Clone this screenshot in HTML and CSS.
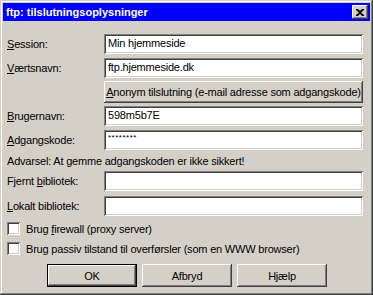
FILE: index.html
```html
<!DOCTYPE html>
<html lang="da">
<head>
    <meta charset="UTF-8">
    <title>ftp: tilslutningsoplysninger</title>
    <link rel="stylesheet" href="styles.css">
</head>
<body>
    <div class="window">
        <div class="titlebar">
            <span class="title">ftp: tilslutningsoplysninger</span>
            <span class="close">
                <svg width="8" height="7" viewBox="0 0 8 7">
                    <path d="M0 0h2l2 2 2-2h2v1l-3 2.5 3 2.5v1h-2l-2-2-2 2h-2v-1l3-2.5-3-2.5z" fill="#000"/>
                </svg>
            </span>
        </div>

        <div class="content">
            <div class="row r-session">
                <label><u>S</u>ession:</label>
                <div class="field">Min hjemmeside</div>
            </div>
            <div class="row r-host">
                <label><u>V</u>ærtsnavn:</label>
                <div class="field">ftp.hjemmeside.dk</div>
            </div>
            <div class="row r-anon">
                <div class="btn wide"><span><u>A</u>nonym tilslutning (e-mail adresse som adgangskode)</span></div>
            </div>
            <div class="row r-user">
                <label><u>B</u>rugernavn:</label>
                <div class="field">598m5b7E</div>
            </div>
            <div class="row r-pass">
                <label><u>A</u>dgangskode:</label>
                <div class="field pass">********</div>
            </div>
            <p class="warning">Advarsel: At gemme adgangskoden er ikke sikkert!</p>
            <div class="row r-remote">
                <label>Fjernt <u>b</u>ibliotek:</label>
                <div class="field"></div>
            </div>
            <div class="row r-local">
                <label><u>L</u>okalt bibliotek:</label>
                <div class="field"></div>
            </div>
            <div class="check r-fw">
                <span class="box"></span>
                <span>Brug <u>f</u>irewall (proxy server)</span>
            </div>
            <div class="check r-passive">
                <span class="box"></span>
                <span>Brug passiv tilstand til overførsler (som en WWW browser)</span>
            </div>
            <div class="buttons">
                <div class="btn default">OK</div>
                <div class="btn">Afbryd</div>
                <div class="btn">Hjælp</div>
            </div>
        </div>
    </div>
</body>
</html>
```

FILE: styles.css
```css
body {
    margin: 0;
    padding: 0;
    font-family: "Liberation Sans", Arial, sans-serif;
    font-size: 11px;
    letter-spacing: -0.2px;
    color: #000;
}
.window {
    width: 373px;
    height: 295px;
    box-sizing: border-box;
    padding: 3px;
    background: #d4d0c8;
    box-shadow: inset -1px -1px #404040, inset 1px 1px #d4d0c8,
                inset -2px -2px #808080, inset 2px 2px #fff;
}
.titlebar {
    height: 18px;
    background: #0000ff;
    display: flex;
    align-items: center;
    justify-content: space-between;
    padding: 0 2px 0 3px;
}
.title {
    color: #fff;
    font-weight: bold;
    font-size: 11px;
    letter-spacing: 0;
}
.close {
    width: 16px;
    height: 14px;
    box-sizing: border-box;
    background: #d4d0c8;
    display: flex;
    align-items: center;
    justify-content: center;
    box-shadow: inset -1px -1px #404040, inset 1px 1px #fff,
                inset -2px -2px #808080;
}
.content {
    padding: 0 7px 0 4px;
}
.row {
    display: flex;
    align-items: center;
    height: 20px;
}
.row label {
    width: 97px;
    flex: none;
}
.field {
    flex: 1;
    height: 20px;
    box-sizing: border-box;
    background: #fff;
    padding: 3px 4px 0;
    white-space: nowrap;
    overflow: hidden;
    box-shadow: inset 1px 1px #808080, inset -1px -1px #fff,
                inset 2px 2px #404040, inset -2px -2px #d4d0c8;
}
.field.pass {
    font-size: 8px;
    padding-top: 3px;
    letter-spacing: 0.5px;
}
.r-session { margin-top: 13px; }
.r-host { margin-top: 4px; }
.r-anon { margin-top: 3px; height: 22px; padding-left: 97px; }
.r-user { margin-top: 3px; }
.r-pass { margin-top: 4px; }
.warning {
    margin: 0;
    height: 21px;
    line-height: 22px;
}
.r-local { margin-top: 5px; }
.btn {
    height: 23px;
    box-sizing: border-box;
    display: flex;
    align-items: center;
    justify-content: center;
    white-space: nowrap;
    background: #d4d0c8;
    box-shadow: inset -1px -1px #404040, inset 1px 1px #fff,
                inset -2px -2px #808080;
}
.btn.wide {
    flex: 1;
    height: 22px;
}
.btn.default {
    box-shadow: inset 0 0 0 1px #000, inset -2px -2px #404040,
                inset 2px 2px #fff, inset -3px -3px #808080;
}
.check {
    display: flex;
    align-items: center;
    height: 13px;
    gap: 6px;
}
.box {
    width: 13px;
    height: 13px;
    box-sizing: border-box;
    background: #fff;
    box-shadow: inset 1px 1px #808080, inset -1px -1px #fff,
                inset 2px 2px #404040, inset -2px -2px #d4d0c8;
}
.r-fw { margin-top: 6px; }
.r-passive { margin-top: 7px; }
.buttons {
    display: flex;
    gap: 5px;
    margin-top: 9px;
    padding-left: 40px;
}
.buttons .btn {
    width: 90px;
}
```
